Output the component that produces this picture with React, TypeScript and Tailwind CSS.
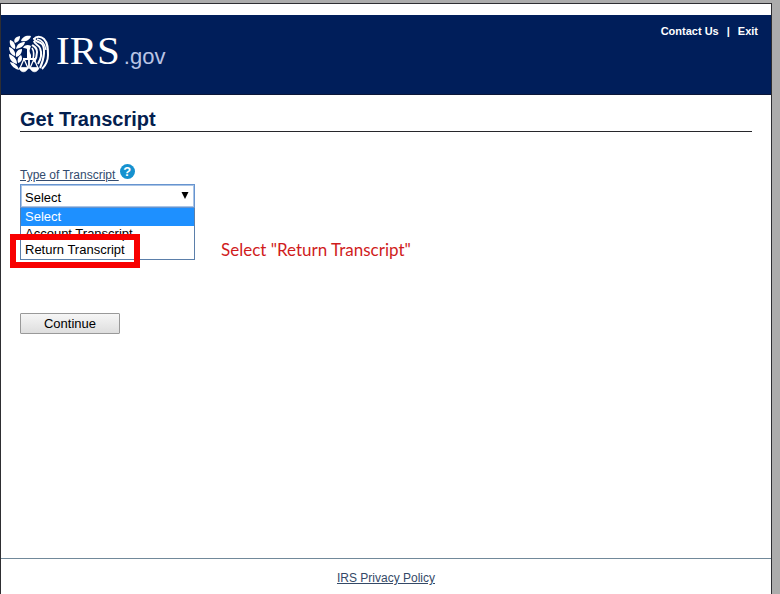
import React from "react";

const OPTIONS = ["Select", "Account Transcript", "Return Transcript"];

function EagleSeal() {
  return (
    <svg viewBox="0 0 40 38" className="h-[38px] w-10 shrink-0" fill="none" stroke="#fff" aria-hidden="true">
      <g fill="#fff" stroke="none">
        <path d="M12 6C13 2 17 0 22 1C21 5 17 7 12 6Z" />
        <path d="M6 8C4 5 6 2 11 1C11 5 9 7 6 8Z" />
        <path d="M6 14C2 13 0 9 1 5C5 6 7 10 6 14Z" />
        <path d="M7 14C8 9 11 7 16 7C15 11 12 13 7 14Z" />
        <path d="M6 21C2 20 0 16 0 12C4 13 7 17 6 21Z" />
        <path d="M7 22C6 17 9 14 13 14C13 18 11 21 7 22Z" />
        <path d="M8 29C3 28 0 24 0 19C5 21 8 24 8 29Z" />
        <path d="M9 28C8 24 9 22 12 20C14 23 13 27 9 28Z" />
        <path d="M10 35C6 34 2 31 1 27C6 28 9 31 10 35Z" />
        <path d="M14 13C15 10 19 9 22 11L21 14C20 16 21 18 22 20V23H18V14C17 13 15 13 14 13Z" />
      </g>
      <path d="M25 4C27 1 32 1 35 4C39 8 39 14 39 20C39 26 36 31 33 34" strokeWidth="2" />
      <path d="M25 3C25 7 30 6 33 9C36 13 36 22 31 33" strokeWidth="2" />
      <path d="M25 6C25 9 30 10 31 13C33 18 32 24 29 29" strokeWidth="2" />
      <path d="M23 10C26 12 28 13 28 17C28 21 27 24 25 27" strokeWidth="2" />
      <path d="M23 13C25 16 25 20 24 24" strokeWidth="1.6" />
      <path d="M28 4C33 5 36 9 37 15" strokeWidth="1.4" />
      <path d="M20 18V33M14 24H26" strokeWidth="1.8" />
      <path d="M15 24L11 33H19ZM25 24L21 33H29Z" strokeWidth="1.3" />
      <path d="M10 33C12 38 17 38 19 33ZM21 33C23 38 28 38 30 33Z" fill="#fff" strokeWidth="0.8" />
    </svg>
  );
}

function Header() {
  return (
    <header className="flex h-20 items-start justify-between border-b border-[#0b1638] bg-[#001e5a] text-white">
      <div className="flex items-center pt-4 pl-2">
        <EagleSeal />
        <div className="flex items-baseline pl-[7px] leading-[38px]">
          <span className="font-['Liberation_Serif',serif] text-[41px]">IRS</span>
          <span className="pl-1 text-[22px] text-[#b9c4e4]">.gov</span>
        </div>
      </div>
      <nav className="flex gap-2 pt-2 pr-[13px] text-[11px] leading-4 font-bold">
        <a href="#contact">Contact Us</a>
        <span>|</span>
        <a href="#exit">Exit</a>
      </nav>
    </header>
  );
}

function TranscriptSelect() {
  return (
    <div className="relative w-[175px]">
      <select
        id="transcript-type"
        defaultValue="Select"
        className="block h-6 w-full appearance-none border border-[#6794cf] bg-white px-1 pt-1 text-[13px] leading-4 text-black outline-1 -outline-offset-2 outline-[#a9c4e6]"
      >
        {OPTIONS.map((option) => (
          <option key={option}>{option}</option>
        ))}
      </select>
      <svg viewBox="0 0 8 7" className="pointer-events-none absolute top-2 right-[6px] h-[7px] w-2" aria-hidden="true">
        <path d="M0.5 0H7.5L4 7Z" fill="#000" />
      </svg>
      <ul className="absolute top-full left-0 w-full border border-t-0 border-[#5b7faa] bg-white text-[13px] leading-4">
        <li className="h-[18px] bg-[#1e90ff] px-1 leading-[18px] text-white">Select</li>
        <li className="px-1">Account Transcript</li>
        <li className="px-1 pb-px">Return Transcript</li>
      </ul>
      <div className="pointer-events-none absolute top-[50px] -left-[10px] h-[34px] w-[130px] border-6 border-[#f80000]" />
      <p className="absolute top-[54px] left-[201px] font-['Lato',sans-serif] text-[17px] leading-6 whitespace-nowrap text-[#d01c1c]">
        Select "Return Transcript"
      </p>
    </div>
  );
}

export default function App() {
  return (
    <div className="flex min-h-screen bg-[#acacac] pt-[3px] pr-2 font-['Liberation_Sans',Arial,sans-serif]">
      <div className="flex flex-1 flex-col border border-b-0 border-[#2e2e32] bg-white pt-[11px]">
        <Header />
        <main className="flex-1 px-[19px] pt-3">
          <h1 className="border-b border-[#27272b] text-xl leading-6 font-bold text-[#03204f]">Get Transcript</h1>
          <form className="pt-8" onSubmit={(event) => event.preventDefault()}>
            <div className="flex h-5 items-start gap-px">
              <label htmlFor="transcript-type" className="pt-[3px] text-xs leading-4 whitespace-pre text-[#334b6e] underline">
                {"Type of Transcript "}
              </label>
              <button
                type="button"
                aria-label="Help"
                className="flex size-[15px] items-center justify-center rounded-full bg-[#1591cf] text-[13px] leading-none font-bold text-white"
              >
                ?
              </button>
            </div>
            <TranscriptSelect />
            <button
              type="submit"
              className="mt-[105px] block h-[21px] w-[100px] rounded-[1px] border border-[#999] bg-linear-to-b from-[#f6f6f6] to-[#dedede] text-[13px] leading-4 text-black"
            >
              Continue
            </button>
          </form>
        </main>
        <footer className="h-9 border-t border-[#71899a] pt-[11px] text-center text-xs leading-4">
          <a href="#privacy" className="text-[#344967] underline">
            IRS Privacy Policy
          </a>
        </footer>
      </div>
    </div>
  );
}
